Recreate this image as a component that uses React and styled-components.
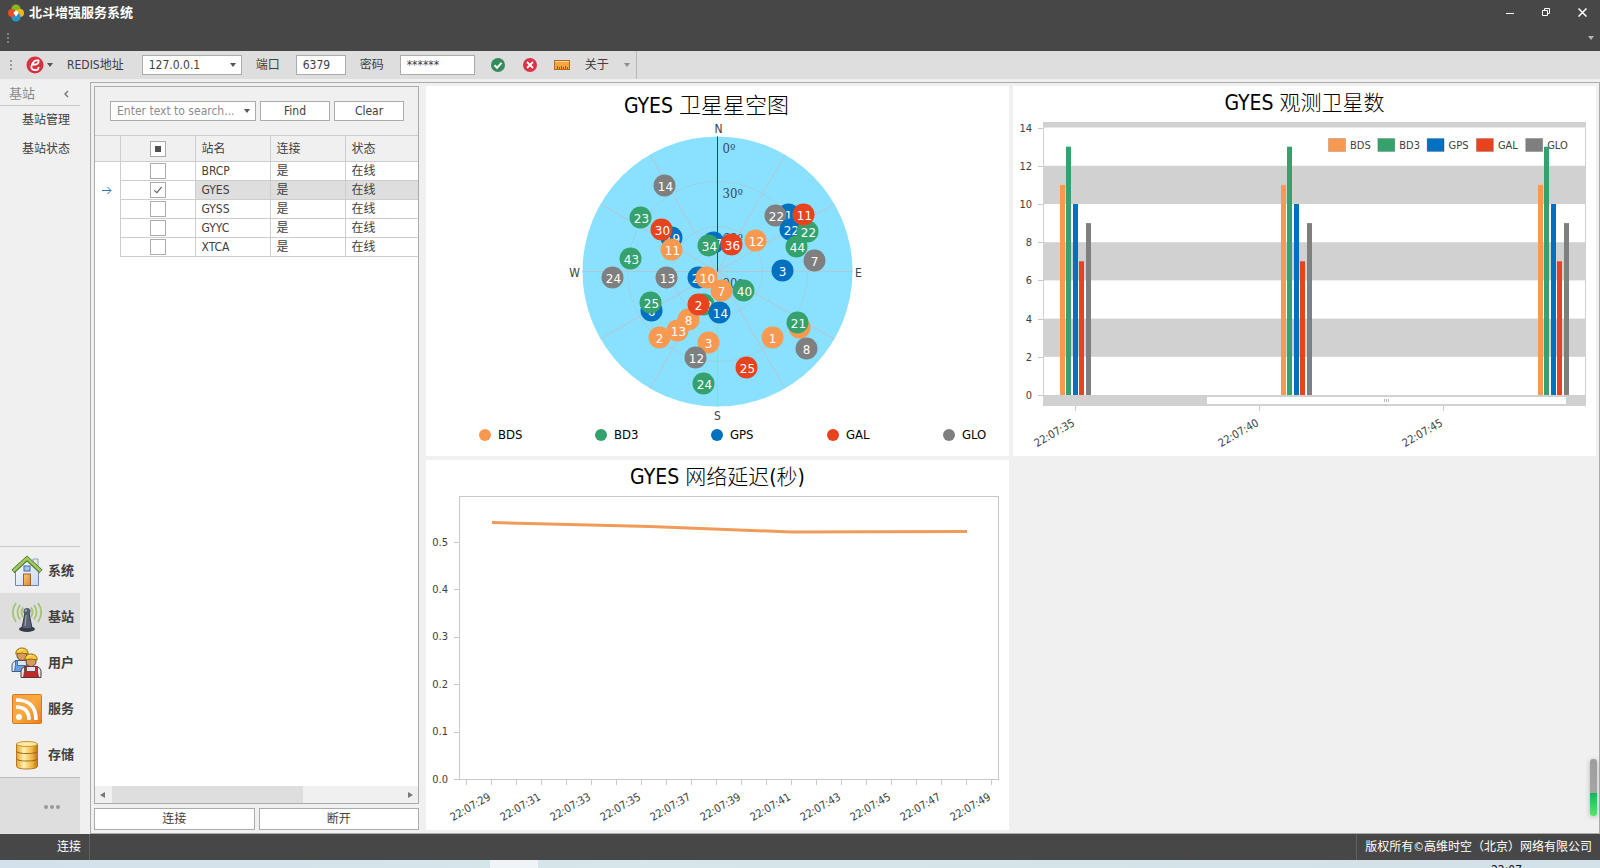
import React, { useEffect, useRef, useState } from "react";
import styled, { createGlobalStyle } from "styled-components";

const GlobalStyle = createGlobalStyle`
  *, *::before, *::after { box-sizing: border-box; }
  body {
    margin: 0;
    background: #f0f0f0;
    color: #404040;
    font: 12px/16px "DejaVu Sans Condensed", "Noto Sans CJK SC", sans-serif;
  }
  button, input, select { font: inherit; color: inherit; }
  h1, h2, ul { margin: 0; padding: 0; }
  ul { list-style: none; }
`;

const UI_FONT = '"DejaVu Sans Condensed", "Noto Sans CJK SC", sans-serif';

const COLORS = {
  BDS: "#f79951",
  BD3: "#35a26d",
  GPS: "#0070c0",
  GAL: "#e7431f",
  GLO: "#7f7f7f"
};
const SYSTEMS = Object.keys(COLORS);

const Root = styled.div`
  min-height: 100vh;
  display: flex;
  flex-direction: column;
`;

/* ---- title bar ---- */

const Header = styled.header`
  background: #474747;
  color: #fff;
`;

const TitleRow = styled.div`
  display: flex;
  align-items: center;
  height: 25px;
  padding-left: 8px;
`;

const AppTitle = styled.h1`
  flex: 1;
  padding-left: 5px;
  font-size: 13px;
  line-height: 24px;
`;

const WindowButton = styled.button`
  width: 36px;
  height: 24px;
  padding: 0;
  border: 0;
  background: none;
`;

const MenuRow = styled.div`
  display: flex;
  justify-content: space-between;
  align-items: center;
  height: 26px;
  padding: 0 6px;
`;

/* ---- toolbar ---- */

const Toolbar = styled.div`
  display: flex;
  height: 28px;
  background: #dedede;
`;

const ToolbarGroup = styled.div`
  display: flex;
  align-items: center;
  padding: 0 6px 0 9px;
  border-right: 1px solid #b8b8b8;
`;

const ToolButton = styled.button`
  display: flex;
  align-items: center;
  gap: 3px;
  height: 24px;
  padding: 0;
  border: 0;
  background: none;
  margin-left: ${props => props.$gap || 0}px;
`;

const Label = styled.label`
  margin-left: 14px;
`;

const Field = styled.span`
  display: flex;
  align-items: center;
  width: ${props => props.$width}px;
  height: 20px;
  margin-left: ${props => props.$gap || 0}px;
  border: 1px solid #ababab;
  background: #fff;
  & input, & select {
    flex: 1;
    min-width: 0;
    height: 18px;
    padding: 0 0 0 6px;
    border: 0;
    outline: 0;
    background: none;
    appearance: none;
  }
  & input::placeholder { color: #8c8c8c; opacity: 1; }
  & svg { margin-right: 5px; }
`;

/* ---- body ---- */

const Body = styled.div`
  flex: 1;
  display: flex;
  gap: 10px;
`;

const Sidebar = styled.nav`
  display: flex;
  flex-direction: column;
  width: 80px;
  padding-top: 3px;
`;

const SidebarTitle = styled.div`
  display: flex;
  justify-content: space-between;
  align-items: center;
  height: 24px;
  padding: 0 11px 0 9px;
  border-bottom: 1px solid #c8c8c8;
  color: #8a8a8a;
  font-size: 13px;
`;

const SubMenu = styled.ul`
  flex: 1;
`;

const SubLink = styled.a`
  display: block;
  padding-right: 10px;
  text-align: right;
  line-height: 29px;
  color: #404040;
  text-decoration: none;
`;

const Modules = styled.ul`
  border-top: 1px solid #c8c8c8;
  border-bottom: 1px solid #bdbdbd;
`;

const ModuleLink = styled.a`
  display: flex;
  align-items: center;
  gap: 5px;
  height: 46px;
  padding: 2px 0 0 11px;
  background: ${props => (props.$active ? "#dedede" : "none")};
  color: #404040;
  font-size: 13px;
  font-weight: bold;
  text-decoration: none;
`;

const MoreButton = styled.button`
  height: 56px;
  padding: 0 0 3px 24px;
  border: 0;
  background: #dedede;
`;

const Workspace = styled.main`
  flex: 1;
  display: grid;
  grid-template-columns: 325px 1fr;
  gap: 7px;
  margin-top: 3px;
  padding: 3px;
  border: 1px solid #ababab;
`;

const StationColumn = styled.section`
  display: flex;
  flex-direction: column;
  gap: 4px;
`;

const StationPanel = styled.div`
  flex: 1;
  display: flex;
  flex-direction: column;
  border: 1px solid #ababab;
  background: #fff;
`;

const SearchBar = styled.form`
  display: flex;
  gap: 4px;
  padding: 14px 14px 14px 15px;
  background: #f0f0f0;
`;

const PushButton = styled.button`
  flex: 1;
  height: ${props => props.$height || 20}px;
  padding: 0;
  border: 1px solid #ababab;
  background: #fff;
`;

const StationTable = styled.table`
  width: 100%;
  table-layout: fixed;
  border-collapse: collapse;
  & th {
    height: 26px;
    padding: 0 0 0 6px;
    border: 1px solid #cdcdcd;
    border-left: 0;
    background: #f0f0f0;
    font-weight: normal;
    text-align: left;
  }
  & td {
    height: 19px;
    padding: 0 0 0 6px;
    border: 1px solid #cdcdcd;
    line-height: 18px;
  }
  & tr > :last-child { border-right: 0; }
  & td:first-child { border: 0; border-right: 1px solid #cdcdcd; }
  & tr > :nth-child(-n + 2) { padding: 0; text-align: center; }
`;

const StationRow = styled.tr`
  & td:nth-child(n + 3) {
    background: ${props => (props.$selected ? "#dedede" : "#fff")};
  }
`;

const Tick = styled.input.attrs({ type: "checkbox" })`
  appearance: none;
  display: block;
  width: 16px;
  height: 16px;
  margin: 0 auto;
  border: 1px solid #ababab;
  background: #fff;
  &::before { content: ""; display: block; margin: 4px; }
  &:indeterminate::before {
    width: 6px;
    height: 6px;
    background: #505050;
  }
  &:checked::before {
    width: 8px;
    height: 4px;
    margin: 4px 3px;
    border: solid #505050;
    border-width: 0 0 1px 1px;
    transform: rotate(-50deg);
  }
`;

const RowArrow = styled.svg`
  display: block;
  margin: 0 auto;
`;

const ScrollBar = styled.div`
  display: flex;
  align-items: center;
  gap: 5px;
  height: 17px;
  margin-top: auto;
  padding: 0 5px 0 5px;
  background: #f0f0f0;
`;

const ScrollTrack = styled.div`
  flex: 1;
  height: 17px;
  margin: 0 2px;
`;

const ScrollThumb = styled.div`
  width: 66%;
  height: 17px;
  background: #dedede;
`;

const ButtonPair = styled.div`
  display: flex;
  gap: 4px;
`;

/* ---- charts ---- */

const Charts = styled.div`
  display: grid;
  grid-template-columns: 1fr 1fr;
  gap: 4px;
  align-content: start;
`;

const ChartCard = styled.section`
  background: #fff;
  padding-bottom: ${props => props.$bottom || 0}px;
`;

const ChartTitle = styled.h2`
  height: 36px;
  padding-right: ${props => props.$right || 0}px;
  color: #000;
  font-size: 21px;
  font-weight: normal;
  line-height: ${props => props.$line || 31}px;
  text-align: center;
`;

const TitleCjk = styled.span`
  font-family: "Noto Sans CJK SC", sans-serif;
  font-size: ${props => props.$size || 21}px;
  font-weight: 300;
`;

const Plot = styled.svg`
  display: block;
  width: 100%;
  height: auto;
  font-family: ${UI_FONT};
`;

const SkyLegend = styled.ul`
  display: flex;
  justify-content: space-between;
  height: 26px;
  padding: 0 20px 0 53px;
  & li {
    display: flex;
    align-items: center;
    gap: 7px;
    width: 46px;
    color: #000;
    font-size: 13px;
  }
`;

const Dot = styled.span`
  flex: none;
  width: 12px;
  height: 12px;
  border-radius: 50%;
  background: ${props => props.$color};
`;

/* ---- bottom ---- */

const StatusBar = styled.footer`
  display: flex;
  justify-content: space-between;
  height: 26px;
  background: #474747;
  color: #fff;
  line-height: 27px;
`;

const StatusCell = styled.div`
  width: ${props => (props.$end ? "auto" : "90px")};
  padding: 0 8px;
  text-align: right;
  border: solid #606060;
  border-width: ${props => (props.$end ? "0 0 0 1px" : "0 1px 0 0")};
`;

const Taskbar = styled.div`
  display: flex;
  height: 8px;
  padding-left: 490px;
  overflow: hidden;
  background: linear-gradient(90deg, #d3e1ec, #d6e6e9 40%, #d3e1e8);
  justify-content: space-between;
`;

const TaskTab = styled.div`
  width: 48px;
  background: #eef4f8;
`;

const Clock = styled.div`
  padding: 2px 78px 0 0;
  color: #111;
`;

const Gauge = styled.div`
  position: absolute;
  right: 3px;
  bottom: 52px;
  width: 7px;
  height: 57px;
  border-radius: 3px;
  box-shadow: 0 1px 5px rgba(0, 0, 0, 0.25);
  background: linear-gradient(#9d9d9d 0, #a5a5a5 34px, #1fae5a 34px, #22c75f 40px, #5be36c 57px);
`;

const Caret = ({ color = "#555" }) => (
  <svg width="6" height="4" viewBox="0 0 6 4"><path d="M0 0h6L3 4z" fill={color} /></svg>
);

const Grip = ({ color = "#999" }) => (
  <svg width="4" height="12" viewBox="0 0 4 12" fill={color}>
    <path d="M1 1h2v2H1zM1 5h2v2H1zM1 9h2v2H1z" />
  </svg>
);

const Logo = () => (
  <svg width="16" height="18" viewBox="0 0 16 18">
    <circle cx="8" cy="5" r="4.6" fill="#86b81e" />
    <circle cx="12" cy="9" r="4" fill="#f4b81b" />
    <circle cx="8" cy="13" r="4.6" fill="#2196cf" />
    <circle cx="4" cy="9" r="4" fill="#e94f24" />
    <path d="M8 6l2.6 3L8 12.400 5.400 9z" fill="#fff" />
  </svg>
);

const HomeIcon = () => (
  <svg width="32" height="32" viewBox="0 0 32 32">
    <defs>
      <linearGradient id="wall" x2="1" y2="1"><stop stopColor="#fff" /><stop offset="1" stopColor="#c6d8f2" /></linearGradient>
      <linearGradient id="door" x2="1" y2="1"><stop stopColor="#f9c67a" /><stop offset="1" stopColor="#d98a35" /></linearGradient>
    </defs>
    <path d="M22 4h5v9l-5-5z" fill="#e6ebf6" stroke="#8c9dc4" />
    <path d="M4.500 15L16 4l11.500 11v15.500h-23z" fill="url(#wall)" stroke="#7187b8" />
    <rect x="13" y="11" width="6" height="5" fill="#a9c6ef" stroke="#46649c" />
    <rect x="12.500" y="19" width="7" height="11.500" fill="url(#door)" stroke="#a0602a" />
    <path d="M2 16.500L16 3.500l14 13" fill="none" stroke="#517b2b" strokeWidth="4.500" />
    <path d="M2.300 16L16 3.300 29.700 16" fill="none" stroke="#9fcb62" strokeWidth="2.500" />
  </svg>
);

const AntennaIcon = () => (
  <svg width="32" height="32" viewBox="0 0 32 32">
    <g fill="none" stroke="#a4c36a" strokeWidth="1.800">
      <path d="M5 2Q-1.500 11 5 21M9 4Q4 11 9 18.500M12 6.500Q9 11 12 16M27 2Q33.500 11 27 21M23 4Q28 11 23 18.500M20 6.500Q23 11 20 16" />
    </g>
    <ellipse cx="16" cy="28" rx="8" ry="3" fill="#363b49" />
    <path d="M14 12h4l3 15q-5 2-10 0z" fill="#5a6377" stroke="#343a48" />
    <path d="M15.200 14l-1.200 11" stroke="#a5afc0" />
    <circle cx="16" cy="10.500" r="3.500" fill="#535c70" />
    <circle cx="15" cy="9.500" r="1.200" fill="#98a3b8" />
  </svg>
);

const Worker = ({ x, y, edge, bib }) => (
  <g transform={`translate(${x} ${y})`}>
    <path d="M0 24v-6q0-4 5-5h10q5 1 5 5v6z" fill="#dfe6ef" stroke={edge} />
    <path d="M5.500 13v5h9v-5h2v5l1 6h-15l1-6v-5z" fill={bib} stroke={edge} strokeWidth="0.800" />
    <circle cx="10" cy="8" r="5" fill="#d79a62" stroke="#6d421f" />
    <path d="M3.800 6.500Q4 .5 10 .5t6.200 6q-6-2-12.400 0z" fill="#fac83a" stroke="#93680f" />
    <path d="M6.500 3.500Q8 1.500 10.500 1.800" fill="none" stroke="#fff0a5" />
  </g>
);

const UsersIcon = () => (
  <svg width="32" height="32" viewBox="0 0 32 32">
    <Worker x={1} y={0.500} edge="#375a91" bib="#6aa0df" />
    <Worker x={10} y={6.500} edge="#5b3533" bib="#bf2b27" />
  </svg>
);

const FeedIcon = () => (
  <svg width="32" height="32" viewBox="0 0 32 32">
    <defs>
      <linearGradient id="feed" x2="1" y2="1"><stop stopColor="#f0a047" /><stop offset=".5" stopColor="#f9a93f" /><stop offset="1" stopColor="#e87d16" /></linearGradient>
    </defs>
    <rect x="1.500" y="1.500" width="29" height="29" rx="1" fill="url(#feed)" stroke="#d17a22" />
    <circle cx="8" cy="24" r="3" fill="#fff" />
    <path d="M5 14q13 0 13 13M5 7q20 0 20 20" fill="none" stroke="#fff" strokeWidth="3.600" />
  </svg>
);

const StorageIcon = () => (
  <svg width="32" height="32" viewBox="0 0 32 32">
    <defs>
      <linearGradient id="gold"><stop stopColor="#e7a52d" /><stop offset=".35" stopColor="#fff1b0" /><stop offset=".75" stopColor="#efb53e" /><stop offset="1" stopColor="#b8761c" /></linearGradient>
    </defs>
    <path d="M5.500 5v22q0 3 10.500 3t10.500-3V5z" fill="url(#gold)" stroke="#b47b25" />
    <ellipse cx="16" cy="5" rx="10.500" ry="2.500" fill="#ffe9a0" stroke="#c89338" />
    <path d="M5.500 12.500Q7 14.500 16 14.500t10.500-2M5.500 20Q7 22 16 22t10.500-2" fill="none" stroke="#a2661b" strokeWidth="1.200" />
  </svg>
);

const MODULES = [
  { name: "系统", Icon: HomeIcon },
  { name: "基站", Icon: AntennaIcon, active: true },
  { name: "用户", Icon: UsersIcon },
  { name: "服务", Icon: FeedIcon },
  { name: "存储", Icon: StorageIcon }
];

// [system, label, dx, dy] from the zenith, in drawing order
const SATELLITES = [
  ["GLO", "14", -53, -86], ["BD3", "23", -77, -54], ["GPS", "19", -46, -34],
  ["GAL", "30", -56, -42], ["BDS", "11", -46, -22], ["BD3", "43", -87, -13],
  ["GLO", "24", -105, 6], ["GLO", "13", -51, 6], ["GPS", "28", -19, 6],
  ["BDS", "10", -11, 6], ["GPS", "17", -4, -29], ["BD3", "34", -9, -26],
  ["GAL", "36", 14, -27], ["BDS", "12", 38, -31], ["GPS", "1", 71, -57],
  ["GLO", "22", 58, -56], ["GPS", "22", 73, -42], ["BD3", "22", 90, -40],
  ["GAL", "11", 86, -57], ["BD3", "44", 79, -25], ["GLO", "7", 97, -11],
  ["GPS", "3", 65, -1], ["BD3", "40", 26, 19], ["BDS", "7", 4, 19],
  ["BDS", "8", -29, 48], ["BD3", "38", -14, 33], ["GAL", "2", -19, 33],
  ["GPS", "14", 2, 41], ["BDS", "13", -40, 59], ["BDS", "2", -58, 66],
  ["BDS", "3", -9, 71], ["GLO", "12", -22, 86], ["BD3", "24", -14, 112],
  ["GAL", "25", 29, 96], ["BDS", "1", 55, 66], ["BDS", "9", 82, 56],
  ["BD3", "21", 80, 51], ["GLO", "8", 89, 77], ["GPS", "6", -66, 39],
  ["BD3", "25", -67, 31]
];

const SkyPlot = () => {
  const spokes = [30, 60, 90, 120, 150, 180, 210, 240, 270, 300, 330];
  return (
    <Plot viewBox="0 0 583 300">
      <g transform="translate(291.5 149.5)">
        <circle r="135" fill="#8ae1ff" />
        <g fill="none" stroke="#b0c8d6">
          <circle r="45" stroke="#9dd0e4" />
          <circle r="90" stroke="#9dd0e4" />
          {spokes.map(a => <path key={a} d="M0 0V-135" transform={`rotate(${a})`} />)}
        </g>
        <path d="M0 0V-135" stroke="#2c4556" />
        <g fontSize="12" fill="#404040" textAnchor="middle">
          <text x="1" y="-139">N</text>
          <text x="0" y="148">S</text>
          <text x="-143" y="5">W</text>
          <text x="141" y="5">E</text>
        </g>
        <g fontSize="13" fill="#34495a" fontFamily='"DejaVu Serif Condensed", serif'>
          {[0, 30, 60, 90].map(v => <text key={v} x="5" y={v * 1.5 - 119}>{v}º</text>)}
        </g>
        <g fontSize="12" textAnchor="middle" fontFamily='"DejaVu Sans", sans-serif'>
          {SATELLITES.map(([sys, label, x, y]) => (
            <g key={sys + label} transform={`translate(${x} ${y})`}>
              <circle r="11" fill={COLORS[sys]} />
              <text x={label.length > 1 ? 1 : 0} y="5" fill="#fff">{label}</text>
            </g>
          ))}
        </g>
      </g>
    </Plot>
  );
};

const COUNTS = { BDS: 11, BD3: 13, GPS: 10, GAL: 7, GLO: 9 };

const CountPlot = () => {
  const y = v => 273 - v * 19.1;
  return (
    <Plot viewBox="0 0 583 334">
      <g fill="#d1d1d1">
        <path d={`M30 0h543V${y(14)}H30z`} />
        {[10, 6, 2].map(v => <rect key={v} x="30" y={y(v + 2)} width="543" height="38.2" />)}
        <rect x="30" y="273" width="543" height="11" />
      </g>
      <path d="M30.5 0V284M572.5 0V284" stroke="#d1d1d1" />
      <g fontSize="11" fill="#404040" textAnchor="end">
        {[0, 2, 4, 6, 8, 10, 12, 14].map(v => (
          <g key={v}>
            <path d={`M25 ${Math.round(y(v)) + 0.5}h5`} stroke="#c8c8c8" />
            <text x="19" y={y(v) + 4}>{v}</text>
          </g>
        ))}
      </g>
      <g fontSize="11" fill="#404040">
        {SYSTEMS.map((s, i) => (
          <g key={s} transform={`translate(${315 + i * 49.3} 16)`}>
            <rect x="0.5" y="0.5" width="17" height="13" fill={COLORS[s]} stroke="#000" strokeOpacity="0.15" />
            <text x="22" y="11">{s}</text>
          </g>
        ))}
      </g>
      {[47, 268, 525].map(x => SYSTEMS.map((s, i) => (
        <rect key={x + s} x={Math.round(x + i * 6.4)} y={y(COUNTS[s])} width="5" height={COUNTS[s] * 19.1} fill={COLORS[s]} />
      )))}
      <rect x="194" y="275" width="359" height="7" fill="#fff" />
      <path d="M371.5 277v3M373.5 277v3M375.5 277v3" stroke="#b8b8b8" />
      <g fontSize="11" fill="#404040" textAnchor="end">
        {["22:07:35", "22:07:40", "22:07:45"].map((t, i) => (
          <g key={t} transform={`translate(${62.5 + i * 184} 284)`}>
            <path d="M0 0v5" stroke="#c8c8c8" />
            <text transform="translate(0 19) rotate(-30)">{t}</text>
          </g>
        ))}
      </g>
    </Plot>
  );
};

const DelayPlot = () => {
  const y = v => 283.5 - v * 474;
  const ticks = Array.from({ length: 22 }, (_, i) => i);
  return (
    <Plot viewBox="0 0 583 334">
      <rect x="33.5" y="0.5" width="539" height="283" fill="none" stroke="#c8c8c8" />
      <g fontSize="11" fill="#404040" textAnchor="end">
        {[0, 0.1, 0.2, 0.3, 0.4, 0.5].map(v => (
          <g key={v}>
            <path d={`M28 ${Math.floor(y(v)) + 0.5}h5`} stroke="#c8c8c8" />
            <text x="22" y={y(v) + 3}>{v.toFixed(1)}</text>
          </g>
        ))}
        {ticks.map(i => (
          <g key={i} transform={`translate(${40.5 + i * 25} 284)`}>
            <path d="M0 0v5" stroke="#c8c8c8" />
            {i % 2 === 1 && <text transform="translate(0 19) rotate(-30)">22:07:{28 + i}</text>}
          </g>
        ))}
      </g>
      <path d="M66 26.500L224 30.500L365 36L541 35.500" fill="none" stroke="#f09b57" strokeWidth="3" />
    </Plot>
  );
};

const HeaderTick = () => {
  const ref = useRef(null);
  useEffect(() => { ref.current.indeterminate = true; }, []);
  return <Tick ref={ref} aria-label="全选" />;
};

const StationTableView = () => {
  const [checked, setChecked] = useState({ GYES: true });
  return (
    <StationTable>
      <colgroup>
        <col style={{ width: 25 }} /><col style={{ width: 75 }} /><col style={{ width: 75 }} />
        <col style={{ width: 75 }} /><col />
      </colgroup>
      <thead>
        <tr><th /><th><HeaderTick /></th><th>站名</th><th>连接</th><th>状态</th></tr>
      </thead>
      <tbody>
        {["BRCP", "GYES", "GYSS", "GYYC", "XTCA"].map(name => (
          <StationRow key={name} $selected={name === "GYES"}>
            <td>
              {name === "GYES" && (
                <RowArrow width="10" height="9" viewBox="0 0 10 9" fill="none" stroke="#2a7ab8">
                  <path d="M0 4.500h9M5.500 1L9 4.500 5.500 8" />
                </RowArrow>
              )}
            </td>
            <td>
              <Tick
                aria-label={name}
                checked={!!checked[name]}
                onChange={() => setChecked({ ...checked, [name]: !checked[name] })}
              />
            </td>
            <td>{name}</td>
            <td>是</td>
            <td>在线</td>
          </StationRow>
        ))}
      </tbody>
    </StationTable>
  );
};

const App = () => (
  <Root>
    <GlobalStyle />
    <Header>
      <TitleRow>
        <Logo />
        <AppTitle>北斗增强服务系统</AppTitle>
        <WindowButton aria-label="最小化">
          <svg width="9" height="9" viewBox="0 0 9 9"><path d="M0 5.500h8" stroke="#fff" /></svg>
        </WindowButton>
        <WindowButton aria-label="还原">
          <svg width="9" height="9" viewBox="0 0 9 9" fill="none" stroke="#fff"><path d="M.5 2.500h5v5h-5zM2.500 2.500v-2h5v5h-2" /></svg>
        </WindowButton>
        <WindowButton aria-label="关闭">
          <svg width="9" height="9" viewBox="0 0 9 9"><path d="M.5.5l8 8M8.500.5l-8 8" stroke="#fff" strokeWidth="1.500" /></svg>
        </WindowButton>
      </TitleRow>
      <MenuRow>
        <Grip color="#808080" />
        <Caret color="#b5b5b5" />
      </MenuRow>
    </Header>

    <Toolbar>
      <ToolbarGroup>
        <Grip />
        <ToolButton $gap={13} aria-label="连接菜单">
          <svg width="18" height="18" viewBox="0 0 18 18">
            <circle cx="9" cy="9" r="8.500" fill="#d8303f" />
            <path d="M6 8.500h3.500Q13 8 12.500 4.500 8 3.500 6 8.500T8.500 14t4-3" fill="none" stroke="#fff" strokeWidth="1.800" />
          </svg>
          <Caret />
        </ToolButton>
        <Label htmlFor="host">REDIS地址</Label>
        <Field $width={100} $gap={18}>
          <select id="host" defaultValue="127.0.0.1"><option>127.0.0.1</option></select>
          <Caret />
        </Field>
        <Label htmlFor="port">端口</Label>
        <Field $width={50} $gap={16}><input id="port" defaultValue="6379" /></Field>
        <Label htmlFor="pwd">密码</Label>
        <Field $width={75} $gap={16}><input id="pwd" defaultValue="******" /></Field>
        <ToolButton $gap={15} aria-label="确认">
          <svg width="16" height="16" viewBox="0 0 16 16">
            <circle cx="8" cy="8" r="7" fill="#348c5c" />
            <path d="M4.500 8.200L7 10.800l4.500-5" fill="none" stroke="#fff" strokeWidth="2" />
          </svg>
        </ToolButton>
        <ToolButton $gap={16} aria-label="取消">
          <svg width="16" height="16" viewBox="0 0 16 16">
            <circle cx="8" cy="8" r="7" fill="#dc3146" />
            <path d="M5 5l6 6M11 5l-6 6" stroke="#fff" strokeWidth="1.800" />
          </svg>
        </ToolButton>
        <ToolButton $gap={16} aria-label="标尺">
          <svg width="16" height="16" viewBox="0 0 16 16">
            <rect x="0.500" y="3.500" width="15" height="9" fill="#f4a540" stroke="#b8681c" />
            <path d="M1 4.500h14" stroke="#ffd994" />
            <path d="M3.500 12V9M5.500 12v-2M7.500 12V9M9.500 12v-2M11.500 12V9M13.500 12v-2" stroke="#a7540f" />
          </svg>
        </ToolButton>
        <ToolButton $gap={15}>关于</ToolButton>
        <ToolButton $gap={15} aria-label="更多"><Caret color="#8c8c8c" /></ToolButton>
      </ToolbarGroup>
    </Toolbar>

    <Body>
      <Sidebar>
        <SidebarTitle>
          基站
          <svg width="5" height="8" viewBox="0 0 5 8"><path d="M4 1L1 4l3 3" fill="none" stroke="#777" strokeWidth="1.500" /></svg>
        </SidebarTitle>
        <SubMenu>
          <li><SubLink href="#manage">基站管理</SubLink></li>
          <li><SubLink href="#status">基站状态</SubLink></li>
        </SubMenu>
        <Modules>
          {MODULES.map(({ name, Icon, active }) => (
            <li key={name}><ModuleLink href="#" $active={active}><Icon />{name}</ModuleLink></li>
          ))}
        </Modules>
        <MoreButton aria-label="更多模块">
          <svg width="16" height="4" viewBox="0 0 16 4" fill="#999"><circle cx="2" cy="2" r="2" /><circle cx="8" cy="2" r="2" /><circle cx="14" cy="2" r="2" /></svg>
        </MoreButton>
      </Sidebar>

      <Workspace>
        <StationColumn>
          <StationPanel>
            <SearchBar onSubmit={e => e.preventDefault()}>
              <Field $width={146}>
                <input aria-label="搜索" placeholder="Enter text to search..." />
                <Caret />
              </Field>
              <PushButton>Find</PushButton>
              <PushButton type="reset">Clear</PushButton>
            </SearchBar>
            <StationTableView />
            <ScrollBar>
              <svg width="5" height="6" viewBox="0 0 5 6"><path d="M5 0v6L0 3z" fill="#777" /></svg>
              <ScrollTrack><ScrollThumb /></ScrollTrack>
              <svg width="5" height="6" viewBox="0 0 5 6"><path d="M0 0v6l5-3z" fill="#777" /></svg>
            </ScrollBar>
          </StationPanel>
          <ButtonPair>
            <PushButton $height={22}>连接</PushButton>
            <PushButton $height={22}>断开</PushButton>
          </ButtonPair>
        </StationColumn>

        <Charts>
          <ChartCard $bottom={8}>
            <ChartTitle $line={34} $right={22}>GYES <TitleCjk $size={22}>卫星星空图</TitleCjk></ChartTitle>
            <SkyPlot />
            <SkyLegend>
              {SYSTEMS.map(s => <li key={s}><Dot $color={COLORS[s]} />{s}</li>)}
            </SkyLegend>
          </ChartCard>
          <ChartCard>
            <ChartTitle>GYES <TitleCjk>观测卫星数</TitleCjk></ChartTitle>
            <CountPlot />
          </ChartCard>
          <ChartCard>
            <ChartTitle>GYES <TitleCjk>网络延迟</TitleCjk>(<TitleCjk>秒</TitleCjk>)</ChartTitle>
            <DelayPlot />
          </ChartCard>
        </Charts>
      </Workspace>
    </Body>

    <StatusBar>
      <StatusCell>连接</StatusCell>
      <StatusCell $end>版权所有©高维时空（北京）网络有限公司</StatusCell>
    </StatusBar>
    <Taskbar>
      <TaskTab />
      <Clock>22:07</Clock>
    </Taskbar>
    <Gauge />
  </Root>
);

export default App;
